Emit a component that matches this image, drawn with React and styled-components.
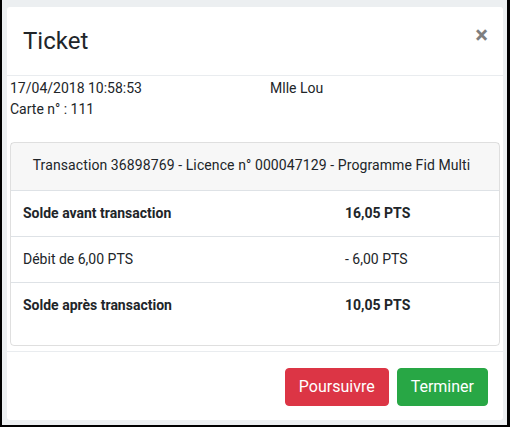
import React from "react";
import styled, { createGlobalStyle } from "styled-components";

const Global = createGlobalStyle`
  html, body { margin: 0; padding: 0; background: #000; }
  body { height: 427px; overflow: hidden; font-family: Roboto, "Liberation Sans", sans-serif; color: #212529; }
`;

const Frame = styled.div`
  margin: 0 3px 0 2px;
  background: #eceff1;
  padding: 7px 4px 5px 5px;
`;

const Modal = styled.div`
  background: #fff;
  border-radius: 3px;
  display: flex;
  flex-direction: column;
`;

const Header = styled.div`
  display: flex;
  align-items: flex-start;
  justify-content: space-between;
  padding: 16px 15px 16px 16px;
  border-bottom: 1px solid #e9ecef;
`;

const Title = styled.h4`
  margin: 0;
  font-size: 24px;
  font-weight: 400;
  line-height: 36px;
`;

const Close = styled.button`
  border: 0;
  background: transparent;
  padding: 0;
  margin: 0 0 0 auto;
  font-family: Roboto, "Liberation Sans", sans-serif;
  font-size: 24px;
  font-weight: 700;
  line-height: 1;
  color: #000;
  opacity: 0.5;
  cursor: pointer;
`;

const Body = styled.div`
  padding: 2px 3px 5px 3px;
`;

const Info = styled.div`
  display: grid;
  grid-template-columns: 260px 1fr;
  font-size: 14px;
  line-height: 21px;
  margin-bottom: 22px;
`;

const Card = styled.div`
  border: 1px solid rgba(0, 0, 0, 0.125);
  border-radius: 4px;
  padding-bottom: 17px;
`;

const CardHeader = styled.div`
  background: rgba(0, 0, 0, 0.03);
  border-bottom: 1px solid #dee2e6;
  padding: 12px 27px 14px 20px;
  text-align: center;
  font-size: 14px;
  line-height: 21px;
  letter-spacing: 0.1px;
`;

const Row = styled.div`
  display: grid;
  grid-template-columns: 322px 1fr;
  font-size: 14px;
  line-height: 21px;
  font-weight: ${(p) => (p.$bold ? 700 : 400)};
  border-top: ${(p) => (p.$first ? "none" : "1px solid #dee2e6")};
`;

const Cell = styled.div`
  padding: 12px;
`;

const Footer = styled.div`
  display: flex;
  justify-content: flex-end;
  gap: 8px;
  padding: 16px 15px 14px;
  border-top: 1px solid #e9ecef;
`;

const Button = styled.button`
  border: 1px solid ${(p) => p.$color};
  background: ${(p) => p.$color};
  color: #fff;
  font-family: Roboto, "Liberation Sans", sans-serif;
  font-size: 16px;
  line-height: 24px;
  padding: 6px 13px;
  border-radius: 4px;
  cursor: pointer;
`;

const rows = [
  { label: "Solde avant transaction", value: "16,05 PTS", bold: true },
  { label: "Débit de 6,00 PTS", value: "- 6,00 PTS", bold: false },
  { label: "Solde après transaction", value: "10,05 PTS", bold: true },
];

export default function App() {
  return (
    <>
      <Global />
      <Frame>
        <Modal>
          <Header>
            <Title>Ticket</Title>
            <Close aria-label="Close">×</Close>
          </Header>
          <Body>
            <Info>
              <div>17/04/2018 10:58:53</div>
              <div>Mlle Lou</div>
              <div>Carte n° : 111</div>
            </Info>
            <Card>
              <CardHeader>
                Transaction 36898769 - Licence n° 000047129 - Programme Fid Multi
              </CardHeader>
              {rows.map((r, i) => (
                <Row key={r.label} $bold={r.bold} $first={i === 0}>
                  <Cell>{r.label}</Cell>
                  <Cell>{r.value}</Cell>
                </Row>
              ))}
            </Card>
          </Body>
          <Footer>
            <Button $color="#dc3545">Poursuivre</Button>
            <Button $color="#28a745">Terminer</Button>
          </Footer>
        </Modal>
      </Frame>
    </>
  );
}
